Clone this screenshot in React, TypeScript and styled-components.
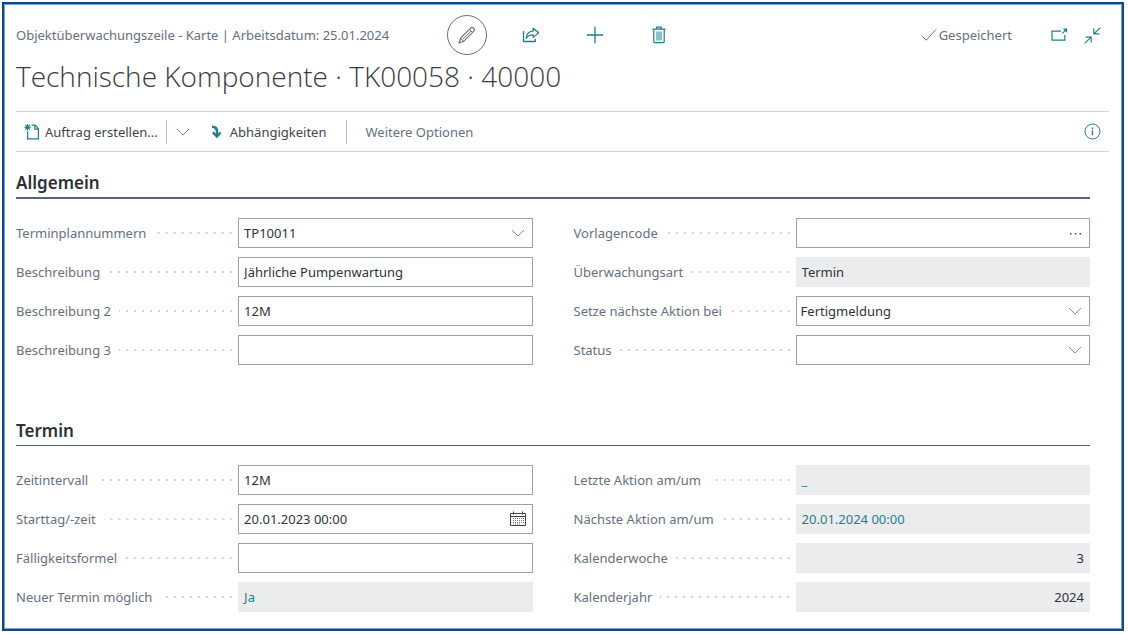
import React, { useId, useState } from "react";
import styled, { createGlobalStyle, css } from "styled-components";

const teal = "#1d8087";
const slate = "#66707f";
const line = "#9aa1ae";

const GlobalStyle = createGlobalStyle`
  *, *::before, *::after { box-sizing: border-box; }
  body {
    margin: 0;
    background: #fff;
    color: #35383d;
    font-family: "Noto Sans", "Open Sans", sans-serif;
    font-size: 13px;
    line-height: 20px;
  }
  button, input, select { font: inherit; color: inherit; }
`;

const Page = styled.main`
  margin: 2px 4px 3px 2px;
  padding: 11px 13px 17px 12px;
  border: 2px solid #0b4a84;
  box-shadow: inset 0 0 0 1px #7fa3c6;
  background: #fff;
`;

const Header = styled.header`
  display: flex;
  align-items: center;
  height: 40px;
  padding-right: 8px;
`;

const Breadcrumb = styled.span`
  color: ${slate};
  white-space: nowrap;
`;

const Actions = styled.div`
  display: flex;
  gap: 24px;
  margin-left: 58px;
`;

const IconButton = styled.button<{ $ring?: boolean }>`
  display: flex;
  align-items: center;
  justify-content: center;
  width: 40px;
  height: 40px;
  padding: 0;
  border: ${(p) => (p.$ring ? `1px solid ${slate}` : "0")};
  border-radius: 50%;
  background: none;
  color: ${(p) => (p.$ring ? slate : teal)};
  cursor: pointer;
`;

const Saved = styled.span`
  display: flex;
  align-items: center;
  gap: 2px;
  margin-left: auto;
  color: ${slate};
`;

const WindowButtons = styled.div`
  display: flex;
  gap: 16px;
  margin-left: 39px;
`;

const SmallButton = styled.button`
  display: flex;
  align-items: center;
  justify-content: center;
  width: 17px;
  height: 20px;
  padding: 0;
  border: 0;
  background: none;
  color: ${teal};
  cursor: pointer;
`;

const Title = styled.h1`
  margin: 1px 0 15px;
  color: #3a3c40;
  font-family: "Open Sans", "Noto Sans", sans-serif;
  font-size: 28px;
  font-weight: 300;
  line-height: 40px;
`;

const Toolbar = styled.nav`
  display: flex;
  align-items: center;
  height: 41px;
  padding: 0 8px;
  border: solid #d0d3d4;
  border-width: 1px 0;
`;

const ToolButton = styled.button<{ $muted?: boolean }>`
  display: flex;
  align-items: center;
  gap: 5px;
  padding: 0;
  border: 0;
  background: none;
  color: ${(p) => (p.$muted ? slate : "#3f444c")};
  white-space: nowrap;
  cursor: pointer;

  svg { color: ${teal}; }
`;

const Divider = styled.span<{ $wide?: boolean }>`
  width: 1px;
  height: 24px;
  margin: ${(p) => (p.$wide ? "0 18px 0 20px" : "0 2px 0 8px")};
  background: #b9bec6;
`;

const Gap = styled.span`
  width: 14px;
`;

const InfoSlot = styled.div`
  margin-left: auto;
`;

const Section = styled.section`
  padding: 17px 19px 0 0;
  & + & { padding-top: 52px; }
`;

const SectionTitle = styled.h2<{ $strong?: boolean }>`
  margin: 0 0 19px;
  border-bottom: ${(p) => (p.$strong ? 2 : 1)}px solid #566473;
  color: #2c2f34;
  font-size: 17px;
  font-weight: 600;
  line-height: 28px;
`;

const Fields = styled.div`
  display: grid;
  grid-template-columns: repeat(2, minmax(0, 1fr));
  column-gap: 41px;
`;

const Column = styled.div`
  display: grid;
  gap: 9px;
`;

const Row = styled.div`
  display: grid;
  grid-template-columns: 43% minmax(0, 1fr);
  height: 30px;
`;

const LabelCell = styled.div`
  display: flex;
  align-items: center;
  padding-right: 6px;
  color: ${slate};
  white-space: nowrap;
`;

const Leader = styled.span`
  flex: 1;
  height: 2px;
  margin-left: 8px;
  background: linear-gradient(to left, #d0d2d6 2px, transparent 2px) right top / 8px 2px repeat-x;
`;

const Box = styled.div<{ $readOnly?: boolean }>`
  position: relative;
  display: flex;
  align-items: center;
  min-width: 0;
  border: 1px solid ${(p) => (p.$readOnly ? "#ebecee" : line)};
  background: ${(p) => (p.$readOnly ? "#ebecee" : "#fff")};
`;

const control = css`
  flex: 1;
  min-width: 0;
  width: 100%;
  height: 28px;
  padding: 0 5px;
  border: 0;
  border-radius: 0;
  outline-offset: 0;
  background: transparent;
  color: #303338;
`;

const TextInput = styled.input<{ $right?: boolean }>`
  ${control}
  text-align: ${(p) => (p.$right ? "right" : "left")};
`;

const Select = styled.select`
  ${control}
  padding: 0 4px;
  appearance: none;
`;

const SelectArrow = styled.span`
  position: absolute;
  top: 0;
  right: 0;
  display: flex;
  align-items: center;
  justify-content: center;
  width: 28px;
  height: 28px;
  color: #8c8c8c;
  pointer-events: none;
`;

const Assist = styled.button<{ $dark?: boolean }>`
  display: flex;
  align-items: center;
  justify-content: center;
  width: 28px;
  height: 28px;
  padding: 0;
  border: 0;
  background: none;
  color: ${(p) => (p.$dark ? "#444" : "#858585")};
  cursor: pointer;
`;

const ValueLink = styled.a`
  padding: 0 5px;
  color: ${teal};
  text-decoration: none;
`;

const Chevron = () => (
  <svg width="14" height="8" viewBox="0 0 14 8" fill="none" stroke="currentColor" aria-hidden="true">
    <path d="M1 1l6 6 6-6" />
  </svg>
);

const Pencil = () => (
  <svg width="18" height="18" viewBox="0 0 18 18" fill="none" stroke="currentColor" strokeLinejoin="round" aria-hidden="true">
    <path d="M1 17l1.6-4.8L13 1.8q1.2-1 2.6.4t.4 2.6L5.6 15.3z" strokeWidth="1.2" />
    <path d="M2.6 12.4l3 2.9M11.4 3.4l3 3M12.8 5.2L5 13" />
  </svg>
);

const Share = () => (
  <svg width="18" height="16" viewBox="0 0 18 16" fill="none" stroke="currentColor" strokeLinejoin="round" aria-hidden="true">
    <path d="M1.5 4v10.5h11.8V12" strokeWidth="1.3" />
    <path d="M11.2 1.2l5.4 4.6-5.4 4.6V7.8C8 7.6 6 8.6 4.2 11.3 4.7 7 7 4.2 11.2 3.9z" strokeWidth="1.2" />
  </svg>
);

const Plus = () => (
  <svg width="18" height="18" viewBox="0 0 18 18" fill="none" stroke="currentColor" strokeWidth="1.3" aria-hidden="true">
    <path d="M9 .8v16.4M.8 9h16.4" />
  </svg>
);

const Trash = () => (
  <svg width="14" height="18" viewBox="0 0 14 18" fill="none" stroke="currentColor" aria-hidden="true">
    <path d="M.3 3.2h13.4M4.8 3V1.2h4.4V3" strokeWidth="1.3" />
    <path d="M1.8 3.5v12.2q0 1 1 1h8.4q1 0 1-1V3.5" strokeWidth="1.2" />
    <path d="M4 5.5h6v9H4z" fill="currentColor" fillOpacity="0.5" stroke="none" />
  </svg>
);

const Check = () => (
  <svg width="16" height="14" viewBox="0 0 16 14" fill="none" stroke="currentColor" aria-hidden="true">
    <path d="M.8 7.8l4.4 4.4L15 1.5" />
  </svg>
);

const PopOut = () => (
  <svg width="17" height="14" viewBox="0 0 17 14" fill="none" stroke="currentColor" strokeWidth="1.2" aria-hidden="true">
    <path d="M10 3.2H1v9h12.8V7" />
    <path d="M11.4 5.4l3.2-3.2" />
    <path d="M11.8 .6h4.4v4.4z" fill="currentColor" stroke="none" />
  </svg>
);

const Collapse = () => (
  <svg width="17" height="17" viewBox="0 0 17 17" fill="none" stroke="currentColor" strokeWidth="1.2" aria-hidden="true">
    <path d="M16.4.6L10.4 6.4M9.8 1.4v5.4h5.6" />
    <path d="M.6 16.4l6-5.8M1.6 10.2h5.6v5.4" />
  </svg>
);

const NewDocument = () => (
  <svg width="16" height="16" viewBox="0 0 16 16" fill="none" stroke="currentColor" aria-hidden="true">
    <path d="M3.6 7.5v7.3h10.8V4.8L11.2 1.2H7.5" strokeWidth="1.2" />
    <path d="M10.8 1.2v4h3.6" strokeWidth="1.2" />
    <path d="M3.6 0v6.6M.3 3.3h6.6M1.2 .9L6 5.7M6 .9L1.2 5.7" strokeWidth="1.1" />
  </svg>
);

const ArrowTurn = () => (
  <svg width="14" height="14" viewBox="0 0 14 14" fill="none" stroke="currentColor" aria-hidden="true">
    <path d="M1 1.8c3.6 0 5 1.6 5 5V11" strokeWidth="2.6" />
    <path d="M1.8 7.4L6 11.6l3.6-4.2" strokeWidth="2.2" />
  </svg>
);

const Info = () => (
  <svg width="17" height="17" viewBox="0 0 17 17" fill="none" stroke="currentColor" aria-hidden="true">
    <circle cx="8.5" cy="8.5" r="7.5" />
    <path d="M8.5 7.2v5M8.5 4.6v1.4" strokeWidth="1.3" />
  </svg>
);

const Dots = () => (
  <svg width="13" height="3" viewBox="0 0 13 3" fill="currentColor" aria-hidden="true">
    <path d="M1 1h1.5v1.5H1zM5.8 1h1.5v1.5H5.8zM10.6 1h1.5v1.5h-1.5z" />
  </svg>
);

const Calendar = () => (
  <svg width="16" height="16" viewBox="0 0 16 16" fill="none" stroke="currentColor" aria-hidden="true">
    <path d="M.5 2.5h15v12H.5zM.5 5.5h15M3.5.5v3M12.5.5v3" />
    <path d="M3 7.5h11M3 9.5h11M3 11.5h11M3 13h8" strokeDasharray="1 1" strokeOpacity="0.7" />
  </svg>
);

type FieldProps = {
  label: string;
  value?: string;
  kind?: "text" | "lookup" | "more" | "date" | "select" | "readonly" | "link";
  right?: boolean;
};

const assistIcon = {
  lookup: { icon: <Chevron />, name: "Auswählen" },
  more: { icon: <Dots />, name: "Nachschlagen" },
  date: { icon: <Calendar />, name: "Datum wählen" },
};

function Field({ label, value = "", kind = "text", right }: FieldProps) {
  const id = useId();
  const [text, setText] = useState(value);
  const readOnly = kind === "readonly" || kind === "link";
  const assist = kind === "lookup" || kind === "more" || kind === "date" ? assistIcon[kind] : null;

  return (
    <Row>
      <LabelCell>
        <label id={`${id}-label`} htmlFor={id}>{label}</label>
        <Leader />
      </LabelCell>
      <Box $readOnly={readOnly}>
        {kind === "link" ? (
          <ValueLink id={id} href="#" aria-labelledby={`${id}-label ${id}`}>{value}</ValueLink>
        ) : kind === "select" ? (
          <>
            <Select id={id} defaultValue={value}>
              <option value={value}>{value}</option>
            </Select>
            <SelectArrow><Chevron /></SelectArrow>
          </>
        ) : (
          <TextInput
            id={id}
            value={text}
            readOnly={readOnly}
            $right={right}
            onChange={(e) => setText(e.target.value)}
          />
        )}
        {assist && (
          <Assist type="button" aria-label={`${label}: ${assist.name}`} $dark={kind !== "lookup"}>
            {assist.icon}
          </Assist>
        )}
      </Box>
    </Row>
  );
}

export default function App() {
  return (
    <>
      <GlobalStyle />
      <Page>
        <Header>
          <Breadcrumb>Objektüberwachungszeile - Karte | Arbeitsdatum: 25.01.2024</Breadcrumb>
          <Actions>
            <IconButton $ring aria-label="Bearbeiten"><Pencil /></IconButton>
            <IconButton aria-label="Teilen"><Share /></IconButton>
            <IconButton aria-label="Neu"><Plus /></IconButton>
            <IconButton aria-label="Löschen"><Trash /></IconButton>
          </Actions>
          <Saved><Check />Gespeichert</Saved>
          <WindowButtons>
            <SmallButton aria-label="In neuem Fenster öffnen"><PopOut /></SmallButton>
            <SmallButton aria-label="Verkleinern"><Collapse /></SmallButton>
          </WindowButtons>
        </Header>
        <Title>Technische Komponente · TK00058 · 40000</Title>
        <Toolbar>
          <ToolButton><NewDocument />Auftrag erstellen...</ToolButton>
          <Divider />
          <Assist aria-label="Weitere Aktionen"><Chevron /></Assist>
          <Gap />
          <ToolButton><ArrowTurn />Abhängigkeiten</ToolButton>
          <Divider $wide />
          <ToolButton $muted>Weitere Optionen</ToolButton>
          <InfoSlot>
            <SmallButton aria-label="Infobox anzeigen"><Info /></SmallButton>
          </InfoSlot>
        </Toolbar>
        <Section>
          <SectionTitle $strong>Allgemein</SectionTitle>
          <Fields>
            <Column>
              <Field label="Terminplannummern" value="TP10011" kind="lookup" />
              <Field label="Beschreibung" value="Jährliche Pumpenwartung" />
              <Field label="Beschreibung 2" value="12M" />
              <Field label="Beschreibung 3" />
            </Column>
            <Column>
              <Field label="Vorlagencode" kind="more" />
              <Field label="Überwachungsart" value="Termin" kind="readonly" />
              <Field label="Setze nächste Aktion bei" value="Fertigmeldung" kind="select" />
              <Field label="Status" kind="select" />
            </Column>
          </Fields>
        </Section>
        <Section>
          <SectionTitle>Termin</SectionTitle>
          <Fields>
            <Column>
              <Field label="Zeitintervall" value="12M" />
              <Field label="Starttag/-zeit" value="20.01.2023 00:00" kind="date" />
              <Field label="Fälligkeitsformel" />
              <Field label="Neuer Termin möglich" value="Ja" kind="link" />
            </Column>
            <Column>
              <Field label="Letzte Aktion am/um" value="_" kind="link" />
              <Field label="Nächste Aktion am/um" value="20.01.2024 00:00" kind="link" />
              <Field label="Kalenderwoche" value="3" kind="readonly" right />
              <Field label="Kalenderjahr" value="2024" kind="readonly" right />
            </Column>
          </Fields>
        </Section>
      </Page>
    </>
  );
}
